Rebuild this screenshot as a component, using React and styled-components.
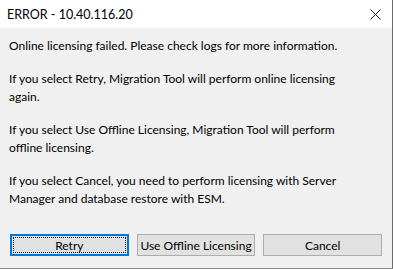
import React from 'react';
import styled, { createGlobalStyle } from 'styled-components';

const GlobalStyle = createGlobalStyle`
  html, body {
    margin: 0;
    padding: 0;
    background: #ffffff;
  }
  body {
    font-family: Lato, "Open Sans", sans-serif;
  }
`;

// each message keeps the line breaks the dialog shows
const paragraphs = [
  ['Online licensing failed. Please check logs for more information.'],
  ['If you select Retry, Migration Tool will perform online licensing', 'again.'],
  ['If you select Use Offline Licensing, Migration Tool will perform', 'offline licensing.'],
  ['If you select Cancel, you need to perform licensing with Server', 'Manager and database restore with ESM.'],
];

const App = () => {
  return (
    <>
      <GlobalStyle />
      <Window>
        <TitleBar>
          <Title>ERROR - 10.40.116.20</Title>
          <CloseButton aria-label="Close">
            <svg width="11" height="11" viewBox="0 0 11 11">
              <path d="M0.5 0.5 L10.5 10.5 M10.5 0.5 L0.5 10.5" stroke="#1a1a1a" strokeWidth="1" fill="none" />
            </svg>
          </CloseButton>
        </TitleBar>
        <Body>
          <Messages>
            {paragraphs.map((lines, index) => (
              <Message key={index}>
                {lines.map((line, i) => (
                  <Line key={i}>{line}</Line>
                ))}
              </Message>
            ))}
          </Messages>
          <ButtonRow>
            <DialogButton $focused>
              <FocusRing>Retry</FocusRing>
            </DialogButton>
            <DialogButton>Use Offline Licensing</DialogButton>
            <DialogButton>Cancel</DialogButton>
          </ButtonRow>
        </Body>
      </Window>
    </>
  );
};

const Window = styled.div`
  width: 393px;
  height: 269px;
  box-sizing: border-box;
  border-right: 1px solid #6b6b6b;
  border-bottom: 1px solid #8a8a8a;
  display: flex;
  flex-direction: column;
`;

const TitleBar = styled.div`
  height: 28px;
  flex: none;
  background: #ffffff;
  display: flex;
  align-items: center;
  justify-content: space-between;
  padding: 0 11px 0 7px;
`;

const Title = styled.span`
  font-size: 12.5px;
  color: #000000;
`;

const CloseButton = styled.div`
  width: 11px;
  height: 11px;
  display: flex;
`;

const Body = styled.div`
  flex: 1;
  background: #f0f0f0;
  display: flex;
  flex-direction: column;
  padding: 9px 10px 12px 9px;
`;

const Messages = styled.div`
  flex: 1;
  display: flex;
  flex-direction: column;
  gap: 15px;
`;

const Message = styled.p`
  margin: 0;
  font-size: 12px;
  line-height: 18px;
  color: #000000;
`;

const Line = styled.span`
  display: block;
  white-space: nowrap;
`;

const ButtonRow = styled.div`
  display: flex;
  gap: 8px;
  padding-left: 1px;
`;

const DialogButton = styled.div`
  width: 119px;
  height: 22px;
  box-sizing: border-box;
  background: #e1e1e1;
  border: ${(p) => (p.$focused ? '2px solid #0078d7' : '1px solid #adadad')};
  padding: ${(p) => (p.$focused ? '1px' : '0')};
  display: flex;
  align-items: center;
  justify-content: center;
  font-size: 12px;
  color: #000000;
  white-space: nowrap;
`;

const FocusRing = styled.span`
  flex: 1;
  align-self: stretch;
  display: flex;
  align-items: center;
  justify-content: center;
  border: 1px dotted #000000;
`;

export default App;
